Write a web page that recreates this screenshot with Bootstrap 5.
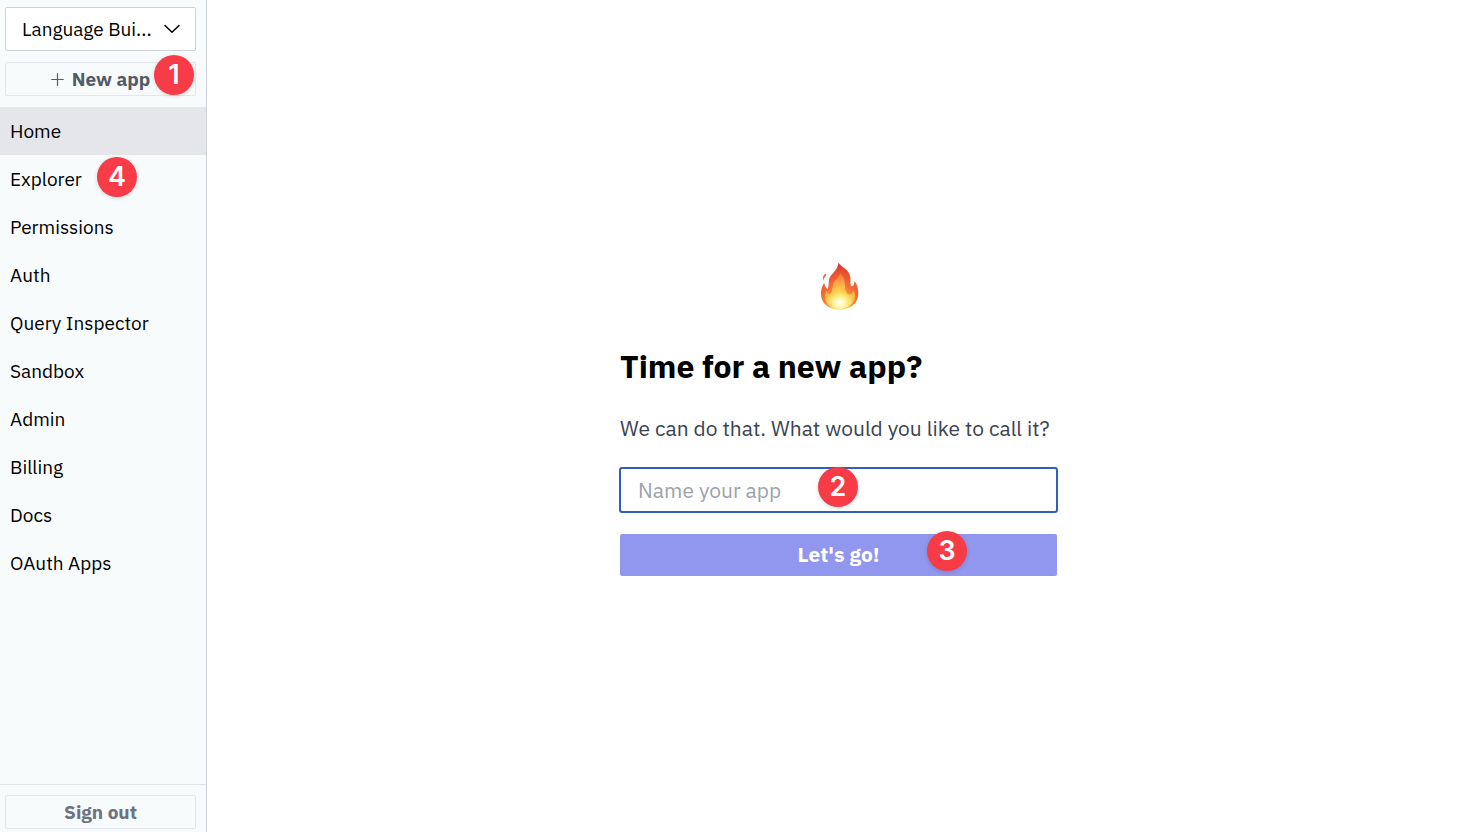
<!DOCTYPE html>
<html lang="en">
<head>
<meta charset="utf-8">
<meta name="viewport" content="width=device-width, initial-scale=1">
<title>New app</title>
<link href="https://cdn.jsdelivr.net/npm/bootstrap@5.3.0/dist/css/bootstrap.min.css" rel="stylesheet">
<style>
  body { font-family: "IBM Plex Sans", Roboto, "Liberation Sans", sans-serif; color: #000; }
  .sidebar { width: 207px; background: #f8fbfc; border-right: 1px solid #cdd1d8; }
  .side-tools { padding: 7px 10px 11px 5px; gap: 11px; }
  .app-select { height: 44px; padding: 0 40px 0 16px; font-size: 19px; line-height: 24px; color: #000; background: #fff; border: 1px solid #ced2d9; border-radius: 2px; appearance: none; }
  .chevron { right: 14px; top: 13px; pointer-events: none; }
  .btn-plain { height: 34px; padding: 0; font-size: 19px; line-height: 24px; font-weight: 700; color: #535b67; background: #f8fbfc; border: 1px solid #e3e6ea; border-radius: 2px; }
  .btn-signout { color: #6b7280; }
  .side-link { height: 48px; padding: 0 10px; font-size: 19px; line-height: 24px; color: #000; }
  .side-link:hover, .side-link:focus { color: #000; background: #eef0f3; }
  .side-link.active { background: #e5e6ea; }
  .side-foot { padding: 10px 10px 3px 5px; border-top: 1px solid #e1e5e9; }
  .stage { padding: 6px 0 0 10px; }
  .new-app { width: 437px; gap: 20px; }
  .new-app h1 { font-size: 32px; line-height: 40px; font-weight: 700; padding: 16px 0 8px; }
  .lead-in { font-size: 21px; line-height: 28px; padding-bottom: 6px; color: #3b4350; white-space: nowrap; }
  .name-field { margin-bottom: 2px; }
  .name-input { height: 44px; padding: 0 17px; font-size: 21px; line-height: 28px; border: 1px solid #2f60c0; border-radius: 2px; box-shadow: 0 0 0 1px #2f60c0; }
  .name-input:focus { border-color: #2f60c0; box-shadow: 0 0 0 1px #2f60c0; }
  .name-input::placeholder { color: #9da2ab; }
  .btn-go, .btn-go:hover { height: 42px; padding: 0 0 2px; font-size: 21px; line-height: 28px; font-weight: 700; color: #fff; background: #9196ee; border: 0; border-radius: 2px; }
  .step { position: absolute; width: 40px; height: 40px; border-radius: 50%; background: #f73c48; color: #fff; font: 600 27px/40px Inter, sans-serif; text-align: center; box-shadow: 0 1px 4px rgba(0,0,0,.15); z-index: 5; pointer-events: none; }
  .step-new { right: 2px; top: -7px; }
  .step-explorer { left: 97px; top: 2px; }
  .step-name { left: 198px; top: -1px; }
  .step-go { left: 307px; top: -3px; }
</style>
</head>
<body>
<div class="d-flex min-vh-100">
  <aside class="sidebar d-flex flex-column flex-shrink-0">
    <div class="side-tools d-flex flex-column">
      <div class="position-relative">
        <select class="app-select w-100 d-block" aria-label="App">
          <option>Language Bui...</option>
        </select>
        <svg class="chevron position-absolute" width="20" height="18" viewBox="0 0 20 18" fill="none" stroke="#000" stroke-width="1.5" stroke-linecap="round" stroke-linejoin="round" aria-hidden="true"><path d="M3 5.500l7 6.700 7-6.700"/></svg>
      </div>
      <div class="position-relative">
        <button type="button" class="btn btn-plain w-100 d-flex align-items-center justify-content-center gap-2">
          <svg width="13" height="13" viewBox="0 0 13 13" stroke="#535b67" stroke-width="1.2" stroke-linecap="round" aria-hidden="true"><path d="M6.500 .7v11.600M.7 6.500h11.600"/></svg>
          <span>New app</span>
        </button>
        <span class="step step-new">1</span>
      </div>
    </div>
    <nav class="nav flex-column flex-nowrap flex-grow-1">
      <a class="side-link d-flex align-items-center text-decoration-none active" aria-current="page" href="#">Home</a>
      <div class="position-relative">
        <a class="side-link d-flex align-items-center text-decoration-none" href="#">Explorer</a>
        <span class="step step-explorer">4</span>
      </div>
      <a class="side-link d-flex align-items-center text-decoration-none" href="#">Permissions</a>
      <a class="side-link d-flex align-items-center text-decoration-none" href="#">Auth</a>
      <a class="side-link d-flex align-items-center text-decoration-none" href="#">Query Inspector</a>
      <a class="side-link d-flex align-items-center text-decoration-none" href="#">Sandbox</a>
      <a class="side-link d-flex align-items-center text-decoration-none" href="#">Admin</a>
      <a class="side-link d-flex align-items-center text-decoration-none" href="#">Billing</a>
      <a class="side-link d-flex align-items-center text-decoration-none" href="#">Docs</a>
      <a class="side-link d-flex align-items-center text-decoration-none" href="#">OAuth Apps</a>
    </nav>
    <div class="side-foot">
      <button type="button" class="btn btn-plain btn-signout w-100">Sign out</button>
    </div>
  </aside>
  <main class="stage flex-grow-1 d-flex align-items-center justify-content-center">
    <form class="new-app d-flex flex-column" onsubmit="return false">
      <svg class="align-self-center" width="40" height="48" viewBox="0 0 40 48" aria-hidden="true">
        <defs>
          <radialGradient id="outer" cx=".5" cy=".92" r=".88"><stop offset="0" stop-color="#ffe45c"/><stop offset=".3" stop-color="#fba23a"/><stop offset=".55" stop-color="#f36d35"/><stop offset="1" stop-color="#dd3a2c"/></radialGradient>
          <radialGradient id="inner" cx=".5" cy=".88" r=".85"><stop offset="0" stop-color="#fffbd0"/><stop offset=".3" stop-color="#ffe660"/><stop offset=".6" stop-color="#fdb946"/><stop offset="1" stop-color="#f4793c"/></radialGradient>
          <radialGradient id="glow"><stop offset="0" stop-color="#fffff0"/><stop offset="1" stop-color="#fff6a0" stop-opacity="0"/></radialGradient>
        </defs>
        <path fill="url(#outer)" d="M19.500 .5C21 5 31.500 7 31.500 17c0 3-.6 5.500 1.300 7.500C35 24 35.500 21.500 35.500 19c3 4 4 8 3.700 13.500C38.800 41 32 47.500 20.500 47.500S2.300 41 2 32.500C1.800 27.500 3 24 5.300 21c.3 2.500 1.200 5 3.400 6 1.600-4 .3-8.500 2.500-12.500C13.500 11 18.800 8 19.500 .5z"/>
        <path fill="#ec6b42" d="M7.200 11.500c.8 3-2.500 3.500-2.600 7C3 15.500 4.500 12.500 7.200 11.500z"/>
        <path fill="url(#inner)" d="M21 11c4.500 4 5 9 5 14 0 4 1.500 7 4.500 7.500 2.300-.5 3.200-2 4-4 1.500 2.500 2 5 1.300 8C33.500 43 28 47 20.500 47S6.500 42 6 36c-.3-3 .3-5 1.500-7 .8 2 2 3 3.500 3 2.500-1.500 2-5 2.800-9C14.800 17 20.500 16.500 21 11z"/>
        <ellipse cx="20.500" cy="40" rx="13" ry="9" fill="url(#glow)"/>
      </svg>
      <h1 class="m-0">Time for a new app?</h1>
      <label class="lead-in" for="app-name">We can do that. What would you like to call it?</label>
      <div class="name-field position-relative">
        <input id="app-name" type="text" class="form-control name-input" placeholder="Name your app">
        <span class="step step-name">2</span>
      </div>
      <div class="position-relative">
        <button type="submit" class="btn btn-go w-100 d-block">Let's go!</button>
        <span class="step step-go">3</span>
      </div>
    </form>
  </main>
</div>
<script src="https://cdn.jsdelivr.net/npm/bootstrap@5.3.0/dist/js/bootstrap.bundle.min.js"></script>
</body>
</html>
